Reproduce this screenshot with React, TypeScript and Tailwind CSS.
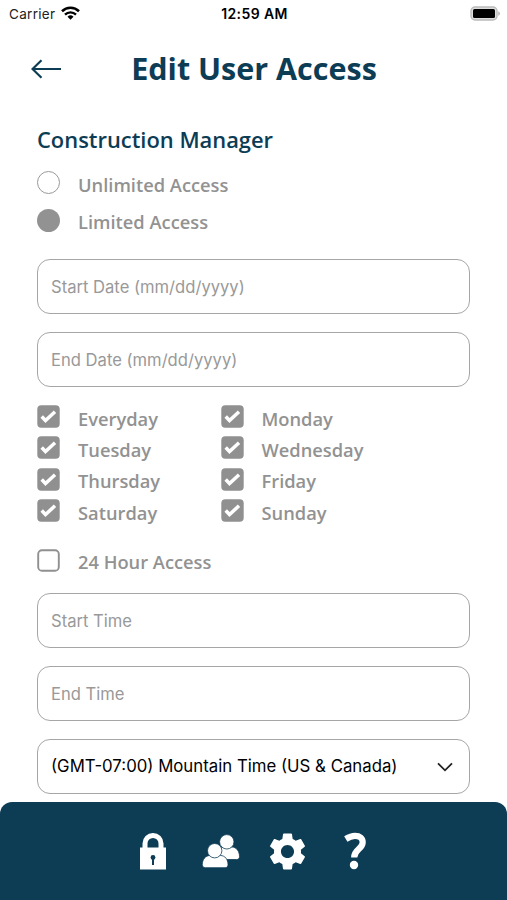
import React, { useState } from 'react'

interface ICheckItem {
  id: string
  label: string
}

const days: ICheckItem[] = [
  { id: 'everyday', label: 'Everyday' },
  { id: 'monday', label: 'Monday' },
  { id: 'tuesday', label: 'Tuesday' },
  { id: 'wednesday', label: 'Wednesday' },
  { id: 'thursday', label: 'Thursday' },
  { id: 'friday', label: 'Friday' },
  { id: 'saturday', label: 'Saturday' },
  { id: 'sunday', label: 'Sunday' }
]

const StatusBar: React.FC = () => (
  <div className="grid h-7 grid-cols-3 items-center pl-[9px] pr-[7px] font-['Inter',sans-serif] text-black">
    <div className="flex items-center gap-[6px]">
      <span className="text-[13.5px] leading-7 tracking-[0.3px] text-[#222]">Carrier</span>
      <svg className="-mt-[2px] h-[14px] w-[19px]" viewBox="0 0 19 14">
        <path d="M1 5.2a12.2 12.2 0 0 1 17 0" fill="none" stroke="#000" strokeWidth="2.6" />
        <path d="M4 8.6a7.9 7.9 0 0 1 11 0" fill="none" stroke="#000" strokeWidth="2.4" />
        <path d="M6.5 10.8a4.3 4.3 0 0 1 6 0l-3 3z" fill="#000" />
      </svg>
    </div>
    <span className="text-center text-[14px] font-semibold leading-7 tracking-[0.4px]">12:59 AM</span>
    <div className="flex items-center justify-end">
      <svg className="-mt-[2px] h-[15px] w-[30px]" viewBox="0 0 30 15">
        <rect x="1" y="1" width="26" height="13" rx="4" fill="#ddd" stroke="#bbb" strokeWidth="1.4" />
        <rect x="3" y="3" width="22" height="9" rx="1.5" fill="#000" />
        <path d="M28.3 5.2c2 .8 2 3.8 0 4.6z" fill="#aaa" />
      </svg>
    </div>
  </div>
)

const Checkbox: React.FC<{
  label: string
  checked: boolean
  onChange: () => void
}> = ({ label, checked, onChange }) => (
  <label className="flex items-center">
    <input type="checkbox" checked={checked} onChange={onChange} className="sr-only" />
    <svg className="h-[23px] w-[23px] shrink-0" viewBox="0 0 23 23">
      {checked ? (
        <>
          <rect x="0.3" y="0.3" width="22.4" height="22.4" rx="4" fill="#909090" />
          <path d="M4.7 11.5l3.8 4 9.5-8.7" fill="none" stroke="#fff" strokeWidth="3.5" />
        </>
      ) : (
        <rect x="1.2" y="1.2" width="20.6" height="20.6" rx="3.8" fill="#fff" stroke="#909090" strokeWidth="1.9" />
      )}
    </svg>
    <span className="ml-[18px] pt-[4px] text-[18.3px] font-semibold leading-[26px]">{label}</span>
  </label>
)

const Radio: React.FC<{
  label: string
  checked: boolean
  onChange: () => void
}> = ({ label, checked, onChange }) => (
  <label className="flex h-[37.5px] items-center">
    <input type="radio" name="access" checked={checked} onChange={onChange} className="sr-only" />
    <span
      className={
        checked
          ? 'h-[23px] w-[23px] rounded-full bg-[#929292]'
          : 'h-[23px] w-[23px] rounded-full border-[1.5px] border-[#999]'
      }
    />
    <span className="ml-[18px] pt-[4px] text-[18.3px] font-semibold leading-[26px]">{label}</span>
  </label>
)

const Field: React.FC<{ placeholder: string }> = ({ placeholder }) => (
  <input
    type="text"
    placeholder={placeholder}
    className="block h-[55px] w-full rounded-[13px] border-[1.5px] border-[#a6a6a6] px-[13px] font-['Inter',sans-serif] text-[16.6px] text-black placeholder:text-[#999]"
  />
)

const App: React.FC = () => {
  const [access, setAccess] = useState('limited')
  const [allDay, setAllDay] = useState(false)
  const [selected, setSelected] = useState<string[]>(days.map((day) => day.id))

  const toggleDay = (id: string) => {
    setSelected((prev) =>
      prev.includes(id) ? prev.filter((item) => item !== id) : [...prev, id]
    )
  }

  return (
    <div className="flex h-[900px] w-[507px] flex-col overflow-hidden bg-white font-['Open_Sans',sans-serif] text-[#929292]">
      <StatusBar />

      <header className="grid h-[81px] grid-cols-[1fr_auto_1fr] items-center pl-[31px] pr-[30px] text-[#0d3c55]">
        <button type="button" aria-label="Back">
          <svg className="h-[20px] w-[31px]" viewBox="0 0 31 20">
            <path d="M30 10H1.5M10.5 1.2L1.5 10l9 8.8" fill="none" stroke="currentColor" strokeWidth="2.2" />
          </svg>
        </button>
        <h1 className="-mt-[2px] text-[30.5px] font-bold leading-[42px]">Edit User Access</h1>
      </header>

      <main className="flex-1 px-[37px] pt-[16px]">
        <h2 className="text-[21.9px] font-semibold leading-[30px] text-[#0d3c55]">Construction Manager</h2>

        <div className="mt-[9px]">
          <Radio label="Unlimited Access" checked={access === 'unlimited'} onChange={() => setAccess('unlimited')} />
          <Radio label="Limited Access" checked={access === 'limited'} onChange={() => setAccess('limited')} />
        </div>

        {/* Dates */}
        <div className="mt-[20px] flex flex-col gap-[18px]">
          <Field placeholder="Start Date (mm/dd/yyyy)" />
          <Field placeholder="End Date (mm/dd/yyyy)" />
        </div>

        {/* Days */}
        <div className="mt-[14px] grid auto-rows-[31.3px] grid-cols-[183.5px_1fr]">
          {days.map((day) => (
            <Checkbox
              key={day.id}
              label={day.label}
              checked={selected.includes(day.id)}
              onChange={() => toggleDay(day.id)}
            />
          ))}
        </div>

        <div className="mt-[19px]">
          <Checkbox label="24 Hour Access" checked={allDay} onChange={() => setAllDay(!allDay)} />
        </div>

        {/* Times */}
        <div className="mt-[18px] flex flex-col gap-[18px]">
          <Field placeholder="Start Time" />
          <Field placeholder="End Time" />
          <button
            type="button"
            className="flex h-[55px] w-full items-center justify-between rounded-[13px] border-[1.5px] border-[#a6a6a6] pl-[13px] pr-[16px] font-['Inter',sans-serif] text-[16.8px] text-black"
          >
            <span>(GMT-07:00) Mountain Time (US &amp; Canada)</span>
            <svg className="h-[10px] w-[16px]" viewBox="0 0 16 10">
              <path d="M1 1.3l7 7 7-7" fill="none" stroke="#222" strokeWidth="1.8" />
            </svg>
          </button>
        </div>
      </main>

      <nav className="flex h-[98px] shrink-0 items-center rounded-t-[12px] bg-[#0d3c55] pl-[139px] text-white">
        <button type="button" aria-label="Locks">
          <svg className="h-[38px] w-[28px]" viewBox="0 0 28 38">
            <path d="M6 17V11.5a8 8 0 0 1 16 0V17" fill="none" stroke="currentColor" strokeWidth="5" />
            <path d="M1 15.5h26v22H1z" fill="currentColor" />
            <circle cx="14" cy="25.5" r="2.4" fill="#0d3c55" />
            <path d="M13 25.5h2v7.5h-2z" fill="#0d3c55" />
          </svg>
        </button>
        <button type="button" aria-label="Users" className="ml-[35px]">
          <svg className="h-[36px] w-[38px]" viewBox="0 0 38 36">
            <g fill="currentColor" stroke="#0d3c55" strokeWidth="0.8">
              <path d="M15 26.500V19c1-3 4-5 6.500-5h8.500c4.500 0 7.500 4.500 7.500 9.500 0 2-1 3-3 3z" />
              <circle cx="24.8" cy="8.8" r="7.2" />
              <path d="M.3 31.5C.3 26.5 3.5 22.500 8 22.500h10.500c4.500 0 7.500 4 7.500 9 0 2-1 3.200-2.900 3.200H3.200C1.300 34.700.3 33.500.3 31.500z" />
              <circle cx="12.7" cy="17.7" r="7.2" />
            </g>
          </svg>
        </button>
        <button type="button" aria-label="Settings" className="ml-[25px]">
          <svg className="h-[45px] w-[45px]" viewBox="0 0 24 24" fill="currentColor">
            <path d="M19.14 12.94c.04-.3.06-.61.06-.94 0-.32-.02-.64-.07-.94l2.030-1.580c.18-.14.23-.41.12-.61l-1.920-3.320c-.12-.22-.37-.29-.59-.22l-2.390.96c-.5-.38-1.030-.7-1.620-.94l-.36-2.540c-.04-.24-.24-.41-.48-.41h-3.840c-.24 0-.43.17-.47.41l-.36 2.540c-.59.24-1.130.57-1.620.94l-2.390-.96c-.22-.08-.47 0-.59.22L2.740 8.870c-.12.21-.08.47.12.61l2.030 1.580c-.05.3-.09.63-.09.94s.02.64.07.94l-2.030 1.580c-.18.14-.23.41-.12.61l1.920 3.320c.12.22.37.29.59.22l2.390-.96c.5.38 1.030.7 1.620.94l.36 2.540c.05.24.24.41.48.41h3.840c.24 0 .44-.17.47-.41l.36-2.540c.59-.24 1.130-.56 1.620-.94l2.390.96c.22.08.47 0 .59-.22l1.920-3.320c.12-.22.07-.47-.12-.61l-2.010-1.580zM12 15.500c-1.930 0-3.500-1.570-3.500-3.500s1.570-3.500 3.500-3.500 3.500 1.570 3.500 3.500-1.570 3.500-3.500 3.500z" />
          </svg>
        </button>
        <button type="button" aria-label="Help" className="ml-[33px]">
          <svg className="h-[38px] w-[24px]" viewBox="0 0 24 38">
            <path d="M2.8 7C6 5 9 3.900 12 3.900c5 0 7.700 2.300 7.700 6.300 0 7.300-8.500 6.800-8.500 15.300" fill="none" stroke="currentColor" strokeWidth="6.2" />
            <circle cx="11" cy="33" r="4.2" fill="currentColor" />
          </svg>
        </button>
      </nav>
    </div>
  )
}

export default App
